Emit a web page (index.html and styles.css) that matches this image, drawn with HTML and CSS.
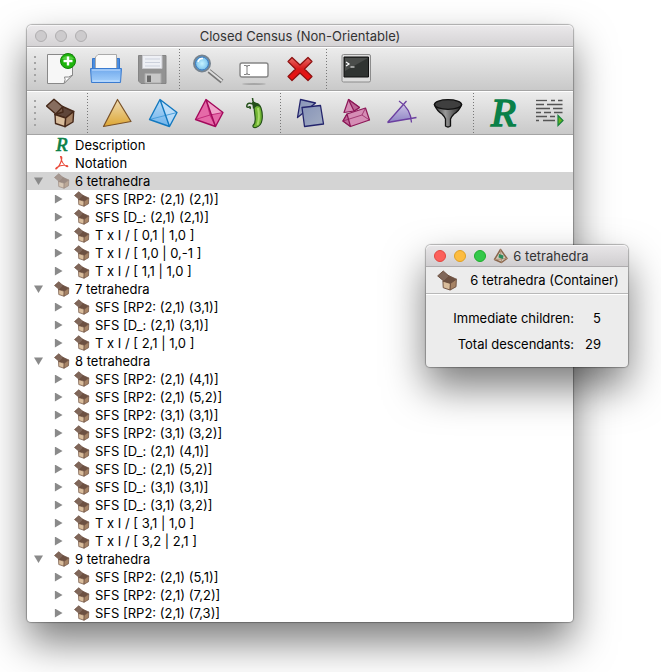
FILE: index.html
```html
<!DOCTYPE html>
<html lang="en">
<head>
<meta charset="utf-8">
<title>Closed Census (Non-Orientable)</title>
<link rel="stylesheet" href="styles.css">
</head>
<body>
<svg class="defs" aria-hidden="true">
  <defs>
    <linearGradient id="gold" x1="0" y1="0" x2="0" y2="1"><stop offset="0" stop-color="#efdcb4"/><stop offset="1" stop-color="#dda633"/></linearGradient>
    <linearGradient id="sky" x1="0" y1="0" x2="0" y2="1"><stop offset="0" stop-color="#b8dcf8"/><stop offset="1" stop-color="#6fb2ea"/></linearGradient>
    <linearGradient id="slate" x1="0" y1="0" x2="1" y2="1"><stop offset="0" stop-color="#8794b8"/><stop offset="1" stop-color="#a3adc2"/></linearGradient>
    <linearGradient id="violet" x1="0" y1="0" x2="0" y2="1"><stop offset="0" stop-color="#c8c0e4"/><stop offset="1" stop-color="#8f84c4"/></linearGradient>
    <linearGradient id="folder" x1="0" y1="0" x2="0" y2="1"><stop offset="0" stop-color="#6fa8ec"/><stop offset="1" stop-color="#a5d0fb"/></linearGradient>
    <linearGradient id="metal" x1="0" y1="0" x2="1" y2="0"><stop offset="0" stop-color="#333"/><stop offset=".4" stop-color="#999"/><stop offset="1" stop-color="#222"/></linearGradient>
    <linearGradient id="red" x1="0" y1="0" x2="0" y2="1"><stop offset="0" stop-color="#e86a66"/><stop offset=".5" stop-color="#d81818"/><stop offset="1" stop-color="#f01010"/></linearGradient>
    <radialGradient id="lens"><stop offset="0" stop-color="#c5f2ff"/><stop offset=".6" stop-color="#8fd0f2"/><stop offset="1" stop-color="#5a9fd8"/></radialGradient>
    <symbol id="box" viewBox="0 0 32 32">
      <g stroke="#46291a" stroke-width="1.4" stroke-linejoin="round">
        <path fill="#5f463a" d="M16.500 9.500 27.700 14.500 19.700 21 9 17.500Z"/>
        <path fill="#765b4b" d="M16.500 9.500 17 15 9 17.500Z"/>
        <path fill="#d9bd9c" d="M9 17.500 19.700 21 19 29.700 9.500 26.500Z"/>
        <path fill="#a68365" d="M19.700 21 27.700 14.500 27 25 19 29.700Z"/>
        <path fill="#876d5f" d="M.5 9 8 2.200 16.700 9.700 9.700 17Z"/>
      </g>
    </symbol>
    <symbol id="box-small" viewBox="0 0 32 32">
      <g stroke="#6b4d3d" stroke-width="1.4" stroke-linejoin="round">
        <path fill="#6d5142" d="M16.500 8 29.500 14 20.500 20.500 9 17Z"/>
        <path fill="#d9bd9c" d="M9 17 20.500 20.500 20 30.500 9.500 27Z"/>
        <path fill="#a68365" d="M20.500 20.500 29.500 14 29 25.500 20 30.500Z"/>
        <path fill="#80675a" d="M1 9 9.500 1.500 18.500 9.500 10.500 17Z"/>
      </g>
    </symbol>
  </defs>
</svg>

<main class="window">
  <header class="titlebar">
    <div class="lights"><i></i><i></i><i></i></div>
    <h1>Closed Census (Non-Orientable)</h1>
  </header>

  <div class="toolbar" role="toolbar" aria-label="File">
    <span class="handle"></span>
    <button aria-label="New"><svg viewBox="0 0 32 32"><path d="M1.500 1.500H26.500V22L18 30.500H1.500Z" fill="#f7f7f7" stroke="#888"/><path d="M26.500 22 18 30.500Q20 26 18.500 24 23 25 26.500 22Z" fill="#fff" stroke="#888"/><circle cx="22" cy="8" r="7.500" fill="#1eb40c" stroke="#128208"/><path d="M16 6a6.500 5 0 0 1 12 0Z" fill="#7be068" opacity=".6"/><path d="M22 3.500v9M17.500 8h9" stroke="#fff" stroke-width="2.400"/></svg></button>
    <button aria-label="Open"><svg viewBox="0 0 32 32"><path d="M.5 5.500H27.500V18H.500Z" fill="#4a8de0" stroke="#3876c8"/><path d="M3.500 17V4L6 1.500H24.500V17Z" fill="#fafafa" stroke="#aaa"/><path d="M-1.500 15.500H29.500L28.500 29.500H-.500Z" fill="url(#folder)" stroke="#3a7bd0"/><path d="M0 17H28M1 28H27" stroke="#c5e0ff"/></svg></button>
    <button aria-label="Save"><svg viewBox="0 0 32 32"><path d="M.5 2.500H28V30.500H3L.500 28Z" fill="#929292" stroke="#858585"/><path d="M4.500 2.500H24V15.500H4.500Z" fill="#eef0f5" stroke="#c8c8cc"/><path d="M7 6H22M7 9.500H22M7 13H22" stroke="#ccd1dc"/><path d="M7 20.500H23V30H7Z" fill="#c8c8c8" stroke="#aaa"/><path d="M9 22.500H13V29H9Z" fill="#686868"/></svg></button>
    <span class="sep"></span>
    <button aria-label="Find"><svg viewBox="0 0 32 32"><path d="M16 18 29 28.500" stroke="#777" stroke-width="4.500"/><path d="M16 17.500 29 28" stroke="#ddd" stroke-width="2"/><circle cx="9" cy="10.500" r="8" fill="url(#lens)" stroke="#76838f" stroke-width="2"/><circle cx="9" cy="10.500" r="6.500" fill="none" stroke="#3778bd"/><path d="M5 9Q6 5 10 5.500" stroke="#fff" fill="none" stroke-width="1.500"/></svg></button>
    <button aria-label="Rename"><svg viewBox="0 0 32 32"><rect x="1" y="10" width="28" height="14" rx="2" fill="#fff" stroke="#858585" stroke-width="1.400"/><path d="M5 12.500h2q1 0 1 1 0-1 1-1h2M8 13v8M5 21.500h2q1 0 1-1 0 1 1 1h2" fill="none" stroke="#666" stroke-width=".8"/><ellipse cx="15" cy="31" rx="12" ry=".8" fill="#999"/></svg></button>
    <button aria-label="Delete"><svg viewBox="0 0 32 32"><path d="M7 4.500 15 12 23 4.500 27 8.500 19.500 16 27 23.500 23 27.500 15 20 7 27.500 3 23.500 10.500 16 3 8.500Z" fill="url(#red)" stroke="#8c1010" stroke-width="1.200" stroke-linejoin="round"/></svg></button>
    <span class="sep"></span>
    <button aria-label="Python console"><svg viewBox="0 0 32 32"><rect x="2" y="1.500" width="28.500" height="27.500" rx="1.500" fill="#ddd" stroke="#8b8b8b"/><path d="M4 4H28.500V24H4Z" fill="#303432" stroke="#111"/><path d="M5 5H28L5 18Z" fill="#4a4d4b"/><path d="M6 9 9 11 6 13M10.500 14h4" fill="none" stroke="#fff" stroke-width="1.200"/></svg></button>
  </div>

  <div class="toolbar" role="toolbar" aria-label="Packets">
    <span class="handle"></span>
    <button aria-label="New container"><svg><use href="#box"/></svg></button>
    <span class="sep"></span>
    <button aria-label="New 2-D triangulation"><svg viewBox="0 0 32 32"><path d="M16.500 2.500 30 24.500 2.500 29.500Z" fill="url(#gold)" stroke="#7a5126" stroke-width="1.200" stroke-linejoin="round"/></svg></button>
    <button aria-label="New 3-D triangulation"><svg viewBox="0 0 32 32"><path d="M13 2.500 30 15.500 22.500 29.500 2.500 22.500Z" fill="url(#sky)"/><path d="M13 2.500 30 15.500 22.500 29.500Z" fill="#d3e9fb" opacity=".6"/><path d="M2.500 22.500 30 15.500" stroke="#4b9fdc"/><path d="M13 2.500 30 15.500 22.500 29.500 2.500 22.500ZL22.500 29.500" fill="none" stroke="#1278bf" stroke-width="1.400" stroke-linejoin="round"/></svg></button>
    <button aria-label="New 4-D triangulation"><svg viewBox="0 0 32 32"><path d="M13 2.500 30 15.500 22.500 29.500 2.500 22.500Z" fill="#e56aa8"/><path d="M13 2.500 30 15.500 17 18Z" fill="#f0a5ca"/><path d="M13 2.500 17 18 22.500 29.500Z" fill="#b8357e"/><path d="M2.500 22.500 17 18 30 15.500M17 18 22.500 29.500M17 18 13 2.500" stroke="#c22a7b" fill="none"/><path d="M13 2.500 30 15.500 22.500 29.500 2.500 22.500ZL22.500 29.500" fill="none" stroke="#a3095b" stroke-width="1.400" stroke-linejoin="round"/></svg></button>
    <button aria-label="New SnapPea triangulation"><svg viewBox="0 0 32 32"><path d="M15 7Q20 5 22 11 24 17 23 23 22 29 17 30.500 13.500 31 14 28.500 17 26 16 19 15 12 15 7Z" fill="#72b634" stroke="#24501a" stroke-width="1.200"/><path d="M19 11Q21 20 18.500 28" stroke="#a8da68" stroke-width="2" fill="none"/><path d="M13.500 1Q13.500 4 15 6M14 7Q9 5 8 8 7 11 10 10 12 9 11 12" fill="none" stroke="#24501a" stroke-width="1.500"/><path d="M13 5Q18 4 22 10L18 9 14 12Z" fill="#24501a"/></svg></button>
    <span class="sep"></span>
    <button aria-label="New normal surfaces"><svg viewBox="0 0 32 32"><g fill="url(#slate)" stroke="#23246c" stroke-width="1.300" stroke-linejoin="round"><path d="M6.500 2.500 21.500 6 3.500 20.500Z"/><path d="M8 10.500 26.500 8.500 29.500 27 10.500 29.500Z"/></g></svg></button>
    <button aria-label="New normal hypersurfaces"><svg viewBox="0 0 32 32"><g stroke="#8c1757" stroke-width="1.200" stroke-linejoin="round"><path fill="#d58db5" d="M8.500 2.500 19.500 10.500 14 14 4 15.500Z"/><path fill="#bc6594" d="M8.500 2.500 14 14 19.500 10.500Z"/><path fill="#d58db5" d="M7 17 25.500 11 29.500 23 10.500 29.500 3 24Z"/><path fill="#bf6a99" d="M7 17 3 24 10.500 29.500Z"/><path fill="none" stroke-width=".7" d="M3 24 22 18 25.500 11M22 18 29.500 23"/></g></svg></button>
    <button aria-label="New angle structures"><svg viewBox="0 0 32 32"><path d="M2 25 16 8Q24 13 25.500 22Z" fill="url(#violet)"/><path d="M1.500 25.500 20.500 4M13 4Q25 12 25.500 25.500M1.500 25.500 30.500 20.500" fill="none" stroke="#6b3fa0" stroke-width="1.300"/></svg></button>
    <button aria-label="New filter"><svg viewBox="0 0 32 32"><path d="M2.500 8Q5 14 10 17 13 20 13.500 22V29Q16 31 18.500 29V22Q19 20 22 17 27 14 29.500 8Z" fill="url(#metal)" stroke="#111" stroke-width="1.300"/><ellipse cx="16" cy="7.500" rx="13.500" ry="4.800" fill="#3f3f3f" stroke="#111" stroke-width="1.300"/></svg></button>
    <span class="sep"></span>
    <button aria-label="New text"><svg viewBox="0 0 32 32"><text class="r-glyph large" x="4" y="29" font-size="41">R</text></svg></button>
    <button aria-label="New script"><svg viewBox="0 0 32 32"><g stroke="#555" stroke-width="1.300"><path d="M3 3.500H14" /><path d="M18 3.500H22M25 3.500H29.500M3 7.500H11M14 7.500H29.500M3 11.500H17M20 11.500H29.500M3 15.500H8M11 15.500H18M21 15.500H29.500M3 19.500H14M17 19.500H22M3 23.500H6M10 23.500H22"/></g><path d="M25 18.500 30 23.500 25 28.500Z" fill="#64b61f" stroke="#17813e" stroke-width="1.200"/></svg></button>
  </div>

  <ul class="tree">
    <li class="row"><span class="arrow"></span><svg class="ico" viewBox="0 0 16 16"><text class="r-glyph" x="2" y="14" font-size="19">R</text></svg>Description</li>
    <li class="row"><span class="arrow"></span><svg class="ico" viewBox="0 0 16 16"><path d="M6.500 1.500Q8.500 1 7.500 5 6 11 2 14 1 13.500 3.500 12 7 9.500 13 10.500 15 12 12.500 11.500 8 9 6.500 1.500Z" fill="none" stroke="#ea4a3a" stroke-width="1.100"/></svg>Notation</li>
    <li class="row selected"><button class="arrow open" aria-label="Collapse"></button><svg class="ico"><use href="#box-small"/></svg>6 tetrahedra</li>
    <li class="row child"><button class="arrow closed" aria-label="Expand"></button><svg class="ico"><use href="#box-small"/></svg>SFS [RP2: (2,1) (2,1)]</li>
    <li class="row child"><button class="arrow closed" aria-label="Expand"></button><svg class="ico"><use href="#box-small"/></svg>SFS [D_: (2,1) (2,1)]</li>
    <li class="row child"><button class="arrow closed" aria-label="Expand"></button><svg class="ico"><use href="#box-small"/></svg>T x I / [ 0,1 | 1,0 ]</li>
    <li class="row child"><button class="arrow closed" aria-label="Expand"></button><svg class="ico"><use href="#box-small"/></svg>T x I / [ 1,0 | 0,-1 ]</li>
    <li class="row child"><button class="arrow closed" aria-label="Expand"></button><svg class="ico"><use href="#box-small"/></svg>T x I / [ 1,1 | 1,0 ]</li>
    <li class="row"><button class="arrow open" aria-label="Collapse"></button><svg class="ico"><use href="#box-small"/></svg>7 tetrahedra</li>
    <li class="row child"><button class="arrow closed" aria-label="Expand"></button><svg class="ico"><use href="#box-small"/></svg>SFS [RP2: (2,1) (3,1)]</li>
    <li class="row child"><button class="arrow closed" aria-label="Expand"></button><svg class="ico"><use href="#box-small"/></svg>SFS [D_: (2,1) (3,1)]</li>
    <li class="row child"><button class="arrow closed" aria-label="Expand"></button><svg class="ico"><use href="#box-small"/></svg>T x I / [ 2,1 | 1,0 ]</li>
    <li class="row"><button class="arrow open" aria-label="Collapse"></button><svg class="ico"><use href="#box-small"/></svg>8 tetrahedra</li>
    <li class="row child"><button class="arrow closed" aria-label="Expand"></button><svg class="ico"><use href="#box-small"/></svg>SFS [RP2: (2,1) (4,1)]</li>
    <li class="row child"><button class="arrow closed" aria-label="Expand"></button><svg class="ico"><use href="#box-small"/></svg>SFS [RP2: (2,1) (5,2)]</li>
    <li class="row child"><button class="arrow closed" aria-label="Expand"></button><svg class="ico"><use href="#box-small"/></svg>SFS [RP2: (3,1) (3,1)]</li>
    <li class="row child"><button class="arrow closed" aria-label="Expand"></button><svg class="ico"><use href="#box-small"/></svg>SFS [RP2: (3,1) (3,2)]</li>
    <li class="row child"><button class="arrow closed" aria-label="Expand"></button><svg class="ico"><use href="#box-small"/></svg>SFS [D_: (2,1) (4,1)]</li>
    <li class="row child"><button class="arrow closed" aria-label="Expand"></button><svg class="ico"><use href="#box-small"/></svg>SFS [D_: (2,1) (5,2)]</li>
    <li class="row child"><button class="arrow closed" aria-label="Expand"></button><svg class="ico"><use href="#box-small"/></svg>SFS [D_: (3,1) (3,1)]</li>
    <li class="row child"><button class="arrow closed" aria-label="Expand"></button><svg class="ico"><use href="#box-small"/></svg>SFS [D_: (3,1) (3,2)]</li>
    <li class="row child"><button class="arrow closed" aria-label="Expand"></button><svg class="ico"><use href="#box-small"/></svg>T x I / [ 3,1 | 1,0 ]</li>
    <li class="row child"><button class="arrow closed" aria-label="Expand"></button><svg class="ico"><use href="#box-small"/></svg>T x I / [ 3,2 | 2,1 ]</li>
    <li class="row"><button class="arrow open" aria-label="Collapse"></button><svg class="ico"><use href="#box-small"/></svg>9 tetrahedra</li>
    <li class="row child"><button class="arrow closed" aria-label="Expand"></button><svg class="ico"><use href="#box-small"/></svg>SFS [RP2: (2,1) (5,1)]</li>
    <li class="row child"><button class="arrow closed" aria-label="Expand"></button><svg class="ico"><use href="#box-small"/></svg>SFS [RP2: (2,1) (7,2)]</li>
    <li class="row child"><button class="arrow closed" aria-label="Expand"></button><svg class="ico"><use href="#box-small"/></svg>SFS [RP2: (2,1) (7,3)]</li>
  </ul>
</main>

<section class="window popup" aria-label="6 tetrahedra">
  <header class="titlebar active">
    <div class="lights"><i class="close"></i><i class="minimise"></i><i class="zoom"></i></div>
    <svg class="ico" viewBox="0 0 16 16"><path d="M7.500 1.500 14 10.500 8.500 14.500 1.500 11.500Z" fill="#d5cdc0" stroke="#8b674e" stroke-width="1.500" stroke-linejoin="round"/><path d="M7.500 1.500 8.500 14.500M1.500 11.500 14 10.500" stroke="#ad8c70"/><path d="M6 6 10.500 7.500 10 11 5.500 9.500Z" fill="#2c8a5c"/></svg>
    <h2>6 tetrahedra</h2>
  </header>
  <div class="packet"><svg><use href="#box-small"/></svg><span>6 tetrahedra (Container)</span></div>
  <dl class="stats">
    <dt>Immediate children:</dt><dd>5</dd>
    <dt>Total descendants:</dt><dd>29</dd>
  </dl>
</section>
</body>
</html>
```
FILE: styles.css
```css
* {
  box-sizing: border-box;
}

body {
  position: relative;
  margin: 0;
  padding: 25px 88px 50px 27px;
  background: #fff;
  color: #000;
  font: 13px/18px Inter, "Liberation Sans", sans-serif;
  overflow: hidden;
}

.defs {
  position: absolute;
  width: 0;
  height: 0;
}

.window {
  border-radius: 5px 5px 4px 4px;
  background: #fff;
  box-shadow: 0 0 1px 1px rgba(0, 0, 0, .28), 0 20px 40px rgba(0, 0, 0, .52);
}

.titlebar {
  position: relative;
  display: flex;
  align-items: center;
  justify-content: center;
  height: 22px;
  border-bottom: 1px solid #aeacae;
  border-radius: 5px 5px 0 0;
  background: linear-gradient(#ebe9eb, #d5d3d5);
  box-shadow: inset 0 1px #f6f5f6;
}

h1,
h2 {
  margin: 0;
  color: #333;
  font-size: 13px;
  font-weight: 400;
}

.lights {
  position: absolute;
  left: 8px;
  display: flex;
  gap: 8px;
}

.lights i {
  width: 12px;
  height: 12px;
  border: 1px solid #b0aeb0;
  border-radius: 50%;
  background: #cdcbcd;
}

.lights .close {
  border-color: #e2463f;
  background: #fc605b;
}

.lights .minimise {
  border-color: #dfa023;
  background: #fdbc40;
}

.lights .zoom {
  border-color: #1dad2b;
  background: #34c84a;
}

.toolbar {
  display: flex;
  align-items: center;
  height: 44px;
  border-top: 1px solid #fff;
  border-bottom: 1px solid #a4a4a4;
  background: linear-gradient(#ececec, #c9c9c9);
}

.handle {
  width: 2px;
  height: 26px;
  margin: 0 3px 0 7px;
  background: repeating-linear-gradient(#a4a4a4 0 2px, transparent 2px 6px);
}

.toolbar button {
  display: grid;
  place-items: center;
  width: 46px;
  height: 40px;
  padding: 0;
  border: 0;
  background: none;
}

.toolbar svg {
  width: 32px;
  height: 32px;
  overflow: visible;
}

.sep {
  width: 9px;
  height: 40px;
  background: repeating-linear-gradient(#777 0 1px, transparent 1px 3px) 2px 0 / 1px 100% no-repeat;
}

.r-glyph {
  fill: #0a8048;
  stroke: #0a8048;
  stroke-width: .7px;
  font-family: "Liberation Serif", serif;
  font-style: italic;
}

.large {
  stroke-width: 1.6px;
}

.tree {
  margin: 0;
  padding: 1px 0 0;
  list-style: none;
}

.row {
  display: flex;
  align-items: center;
  height: 18px;
  padding-left: 7px;
  white-space: pre;
}

.child {
  padding-left: 27px;
}

.selected {
  background: #d4d4d4;
}

.selected .ico {
  opacity: .55;
}

.ico {
  flex: none;
  width: 16px;
  height: 16px;
  margin-right: 5px;
  overflow: visible;
}

.arrow {
  flex: none;
  width: 9px;
  height: 9px;
  margin-right: 11px;
  padding: 0;
  border: 0;
}

.open {
  background: #8a8a8a;
  clip-path: polygon(0 10%, 100% 10%, 50% 95%);
}

.closed {
  background: #8a8a8a;
  clip-path: polygon(10% 0, 95% 50%, 10% 100%);
}

.popup {
  position: absolute;
  top: 245px;
  right: 33px;
  background: #ececec;
}

.active {
  justify-content: flex-start;
  padding-left: 67px;
  background: linear-gradient(#e8e6e8, #d0ced0);
}

.active .ico {
  margin-right: 4px;
}

.packet {
  display: flex;
  align-items: center;
  gap: 12px;
  height: 27px;
  padding: 0 8px 0 11px;
  border-bottom: 1px solid #b8b8b8;
  white-space: nowrap;
}

.packet svg {
  width: 21px;
  height: 21px;
}

.stats {
  display: grid;
  grid-template-columns: 1fr auto;
  gap: 8px 11px;
  margin: 0;
  padding: 14px 27px 14px;
  border-top: 1px solid #fff;
  text-align: right;
  white-space: nowrap;
}

.stats dd {
  margin: 0;
}
```
